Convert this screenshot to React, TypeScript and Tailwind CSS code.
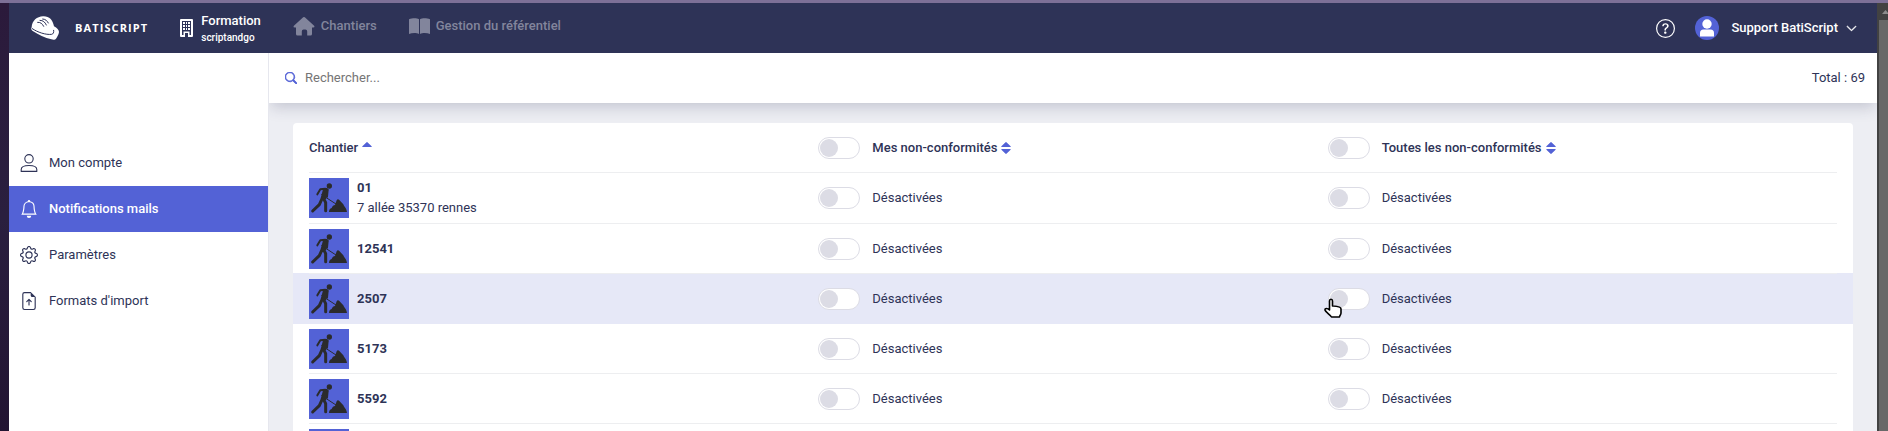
import { useState } from "react";
import type { ReactNode } from "react";
import {
  BsBell,
  BsChevronDown,
  BsFileEarmarkArrowUp,
  BsGear,
  BsQuestionCircle,
  BsSearch,
} from "react-icons/bs";

type Site = { name: string; address?: string; active?: boolean };

const sites: Site[] = [
  { name: "01", address: "7 allée 35370 rennes" },
  { name: "12541" },
  { name: "2507", active: true },
  { name: "5173" },
  { name: "5592" },
  { name: "" },
];

const menu = [
  { label: "Mon compte", icon: Person },
  { label: "Notifications mails", icon: BsBell, current: true },
  { label: "Paramètres", icon: BsGear },
  { label: "Formats d'import", icon: BsFileEarmarkArrowUp },
];

function Person({ className }: { className?: string }) {
  return (
    <svg viewBox="0 0 18 18" className={className} fill="none" stroke="currentColor" strokeWidth="1.100" aria-hidden="true">
      <circle cx="9" cy="4.800" r="4.200" />
      <path strokeLinejoin="round" d="M1.200 17.400v-1.900c0-2.400 2.600-4 7.800-4s7.800 1.600 7.800 4v1.900z" />
    </svg>
  );
}

function Helmet() {
  return (
    <svg viewBox="0 0 84 72" className="h-6 w-7" aria-hidden="true">
      <path
        fill="#fff"
        d="M2 34C3 14 18 2 36 1c18-1 29 10 33 30 9 5 15 11 15 17-1 8-5 14-9 20-3 4-8 4-14 2C42 66 22 56 4 44c-4-3-4-6-2-10z"
      />
      <g fill="none" stroke="#2e3357" strokeLinecap="round">
        <path strokeWidth="3" d="M4 38c16 11 40 19 58 17 5-1 7-6 6-12" />
        <path strokeWidth="3" d="M20 19c8-1 14 4 18 12M27 13c9 0 15 5 19 14M35 9c8 0 13 5 17 12" />
      </g>
    </svg>
  );
}

function Building() {
  return (
    <svg viewBox="0 0 13 18" className="h-[18px] w-[13px]" aria-hidden="true">
      <path
        fill="#fff"
        fillRule="evenodd"
        d="M1 0h11a1 1 0 0 1 1 1v16a1 1 0 0 1-1 1H8v-4H5v4H1a1 1 0 0 1-1-1V1a1 1 0 0 1 1-1zM2 2v14h1.500v-3.500h6V16H11V2z"
      />
      <path fill="#fff" d="M3 3h2v2H3zm3 0h1v2H6zm2 0h2v2H8zM3 6h2v2H3zm3 0h1v2H6zm2 0h2v2H8zM3 9h2v2H3zm3 0h1v2H6zm2 0h2v2H8z" />
    </svg>
  );
}

function House() {
  return (
    <svg viewBox="0 0 22 19" className="h-[19px] w-[22px]" fill="currentColor" aria-hidden="true">
      <path d="M9.900.5a1.600 1.600 0 0 1 2.200 0l9 8.300c.7.700.3 1.700-.6 1.700H19V17a1.600 1.600 0 0 1-1.600 1.600h-3.200v-4.200a1.800 1.800 0 0 0-1.800-1.800h-1.800a1.800 1.800 0 0 0-1.800 1.800v4.200H4.600A1.600 1.600 0 0 1 3 17v-6.500H1.500c-.9 0-1.300-1-.6-1.700z" />
    </svg>
  );
}

function Book() {
  return (
    <svg viewBox="0 0 21 16" className="h-4 w-[21px]" fill="currentColor" aria-hidden="true">
      <path d="M0 1.200C3 0 7.500-.4 10 1.200V16c-2.500-1.300-7-1.200-10 0zM11 1.200C13.500-.4 18 0 21 1.200V16c-3-1.200-7.500-1.300-10 0z" />
    </svg>
  );
}

function Avatar() {
  return (
    <svg viewBox="0 0 24 24" className="size-6" aria-hidden="true">
      <circle cx="12" cy="12" r="12" fill="#5362d6" />
      <circle cx="12" cy="8" r="4.700" fill="#fff" />
      <path fill="#fff" d="M5 20.500V17a3.500 3.500 0 0 1 3.500-3.500h7A3.500 3.500 0 0 1 19 17v3.500z" />
    </svg>
  );
}

function Worker() {
  return (
    <svg viewBox="0 0 120 120" className="block size-10 shrink-0 bg-[#5362d6]" aria-hidden="true">
      <g fill="#2b2b2b">
        <circle cx="61" cy="24" r="8" />
        <path d="M43 30h12l3 6-7 28-16-3z" />
        <path d="M60 102c0-7 3-11 8-12 2-6 6-8 10-9l5-14c2-4 5-4 8-1l12 13c3 8 9 10 11 23z" />
      </g>
      <g fill="none" stroke="#2b2b2b" strokeLinecap="round" strokeLinejoin="round">
        <path strokeWidth="6" d="M49 32l-15 2-9 15M56 35l-2 21" />
        <path strokeWidth="9" d="M40 60l-9 20-20 19M44 62l6 12v24" />
        <path strokeWidth="3" d="M38 50l46 30" />
      </g>
    </svg>
  );
}

function SortArrows({ ascending = false }: { ascending?: boolean }) {
  return (
    <svg viewBox="0 0 10 12" className="h-3 w-[10px]" fill="#5362d6" aria-hidden="true">
      <path d="M4.300.4q.7-.7 1.400 0L9.600 4.200q.5.800-.5.900H.9q-1-.1-.5-.9z" />
      {!ascending && <path d="M4.300 11.600q.7.700 1.400 0l3.900-3.800q.5-.8-.5-.9H.9q-1 .1-.5.900z" />}
    </svg>
  );
}

function Toggle({ label, heading = false }: { label: string; heading?: boolean }) {
  const [on, setOn] = useState(false);
  return (
    <label className="flex w-fit items-center gap-3">
      <input
        type="checkbox"
        role="switch"
        checked={on}
        onChange={() => setOn(!on)}
        className="flex h-[22px] w-[42px] shrink-0 appearance-none items-center rounded-full border border-[#dcdce5] bg-white px-px before:size-[18px] before:rounded-full before:bg-[#dcdce5] checked:justify-end checked:before:bg-[#5362d6]"
      />
      <span className={heading ? "font-medium" : ""}>{label}</span>
    </label>
  );
}

function HeadToggle({ label }: { label: string }) {
  return (
    <div className="flex items-center gap-1">
      <Toggle label={label} heading />
      <button type="button" aria-label={`Trier : ${label}`}>
        <SortArrows />
      </button>
    </div>
  );
}

function TopLink({ icon, children }: { icon: ReactNode; children: ReactNode }) {
  return (
    <a href="#" className="flex items-center gap-1.5 font-medium text-[#82859c]">
      {icon}
      {children}
    </a>
  );
}

function Pointer() {
  return (
    <svg
      viewBox="0 0 18 20"
      className="absolute top-6 -left-1 h-5 w-[18px]"
      fill="#fff"
      stroke="#000"
      strokeWidth="1.600"
      strokeLinejoin="round"
      aria-hidden="true"
    >
      <path d="M5.500 12V3c0-2.300 3-2.300 3 0v5c3 .2 8.500.3 8.500 3v4c0 2-1.500 2.500-1.500 4h-8C6.500 17 1.500 14 1 12c-.2-2 2.500-2 4.500 0z" />
    </svg>
  );
}

function SiteRow({ name, address, active }: Site) {
  const cell = `border-b pt-[5px] ${address ? "pb-[5px]" : "pb-1"} ${active ? "relative border-[#e6e8f7] bg-[#e6e8f7]" : "border-[#edeef0]"}`;
  return (
    <tr>
      <td
        className={`${cell} ${active ? "before:absolute before:-top-px before:-bottom-px before:-left-4 before:w-4 before:bg-[#e6e8f7]" : ""}`}
      >
        <div className="flex items-center gap-2">
          <Worker />
          <div>
            <div className="leading-5 font-bold">{name}</div>
            {address && <div className="leading-5">{address}</div>}
          </div>
        </div>
      </td>
      <td className={cell}>{name && <Toggle label="Désactivées" />}</td>
      <td
        className={`${cell} ${active ? "after:absolute after:-top-px after:-right-4 after:-bottom-px after:w-4 after:bg-[#e6e8f7]" : ""}`}
      >
        {name && <Toggle label="Désactivées" />}
        {active && <Pointer />}
      </td>
    </tr>
  );
}

export default function App() {
  return (
    <div className="flex h-screen flex-col overflow-hidden border-t-[3px] border-[#7d7097] bg-linear-to-b from-[#2b1a3b] via-[#2a1f3f] to-[#221432] font-['Roboto',sans-serif] text-[13px] text-[#2e3357]">
      <div className="flex min-h-0 grow pl-[9px]">
        <div className="flex min-w-0 grow flex-col bg-[#edeef3]">
          <header className="flex h-[50px] shrink-0 items-center bg-[#2e3357] pr-5 pl-[22px] text-white">
            <a href="#" className="flex items-center gap-4">
              <Helmet />
              <span className="font-['Open_Sans',sans-serif] text-[11px] font-bold tracking-widest">BATISCRIPT</span>
            </a>
            <a href="#" className="ml-8 flex items-center gap-2">
              <Building />
              <span className="flex flex-col pt-0.5">
                <span className="leading-[17px] font-medium">Formation</span>
                <span className="text-[10px] leading-[17px] font-medium">scriptandgo</span>
              </span>
            </a>
            <nav className="ml-8 flex items-center gap-8 pb-1">
              <TopLink icon={<House />}>Chantiers</TopLink>
              <TopLink icon={<Book />}>Gestion du référentiel</TopLink>
            </nav>
            <div className="ml-auto flex items-center gap-5">
              <button type="button" aria-label="Aide">
                <BsQuestionCircle className="size-[19px]" />
              </button>
              <button type="button" className="flex items-center font-medium">
                <Avatar />
                <span className="ml-3">Support BatiScript</span>
                <BsChevronDown className="ml-2 size-[11px]" strokeWidth="1" />
              </button>
            </div>
          </header>

          <div className="flex min-h-0 grow">
            <aside className="w-[260px] shrink-0 border-r border-[#e6e7ee] bg-white pt-[87px]">
              <nav>
                {menu.map(({ label, icon: Icon, current }) => (
                  <a
                    key={label}
                    href="#"
                    aria-current={current ? "page" : undefined}
                    className={`flex h-[46px] items-center gap-[11px] px-[11px] ${current ? "bg-[#5362d6] font-medium text-white" : ""}`}
                  >
                    <Icon className="size-[18px]" />
                    {label}
                  </a>
                ))}
              </nav>
            </aside>

            <main className="flex min-w-0 grow flex-col overflow-hidden">
              <div className="flex h-[50px] shrink-0 items-center bg-white pr-3 pl-4 shadow-[0_6px_14px_-2px_rgba(46,51,87,0.22)]">
                <label className="flex grow items-center gap-2">
                  <BsSearch className="size-3 text-[#5362d6]" strokeWidth="1" />
                  <input
                    type="search"
                    aria-label="Rechercher"
                    placeholder="Rechercher..."
                    className="grow outline-none placeholder:text-[#757575]"
                  />
                </label>
                <span>Total : 69</span>
              </div>

              <div className="mx-6 mt-5 grow overflow-hidden rounded-t bg-white px-4">
                <table className="w-full table-fixed border-separate border-spacing-0 text-left">
                  <thead>
                    <tr className="h-[50px]">
                      <th className="border-b border-[#edeef0] font-medium">
                        <button type="button" className="flex items-center gap-1">
                          Chantier
                          <SortArrows ascending />
                        </button>
                      </th>
                      <th className="border-b border-[#edeef0] font-medium">
                        <HeadToggle label="Mes non-conformités" />
                      </th>
                      <th className="border-b border-[#edeef0] font-medium">
                        <HeadToggle label="Toutes les non-conformités" />
                      </th>
                    </tr>
                  </thead>
                  <tbody>
                    {sites.map((site) => (
                      <SiteRow key={site.name} {...site} />
                    ))}
                  </tbody>
                </table>
              </div>
            </main>
          </div>
        </div>

        <div className="flex w-[11px] shrink-0 flex-col border-l-2 border-[#424242] bg-[#686868]" aria-hidden="true">
          <div className="flex h-[17px] items-center justify-end bg-[#424242]">
            <svg viewBox="0 0 6 4" className="h-1 w-1.5" fill="#8b8b8b">
              <path d="M3.500 0L7 4H0z" />
            </svg>
          </div>
        </div>
      </div>
    </div>
  );
}
